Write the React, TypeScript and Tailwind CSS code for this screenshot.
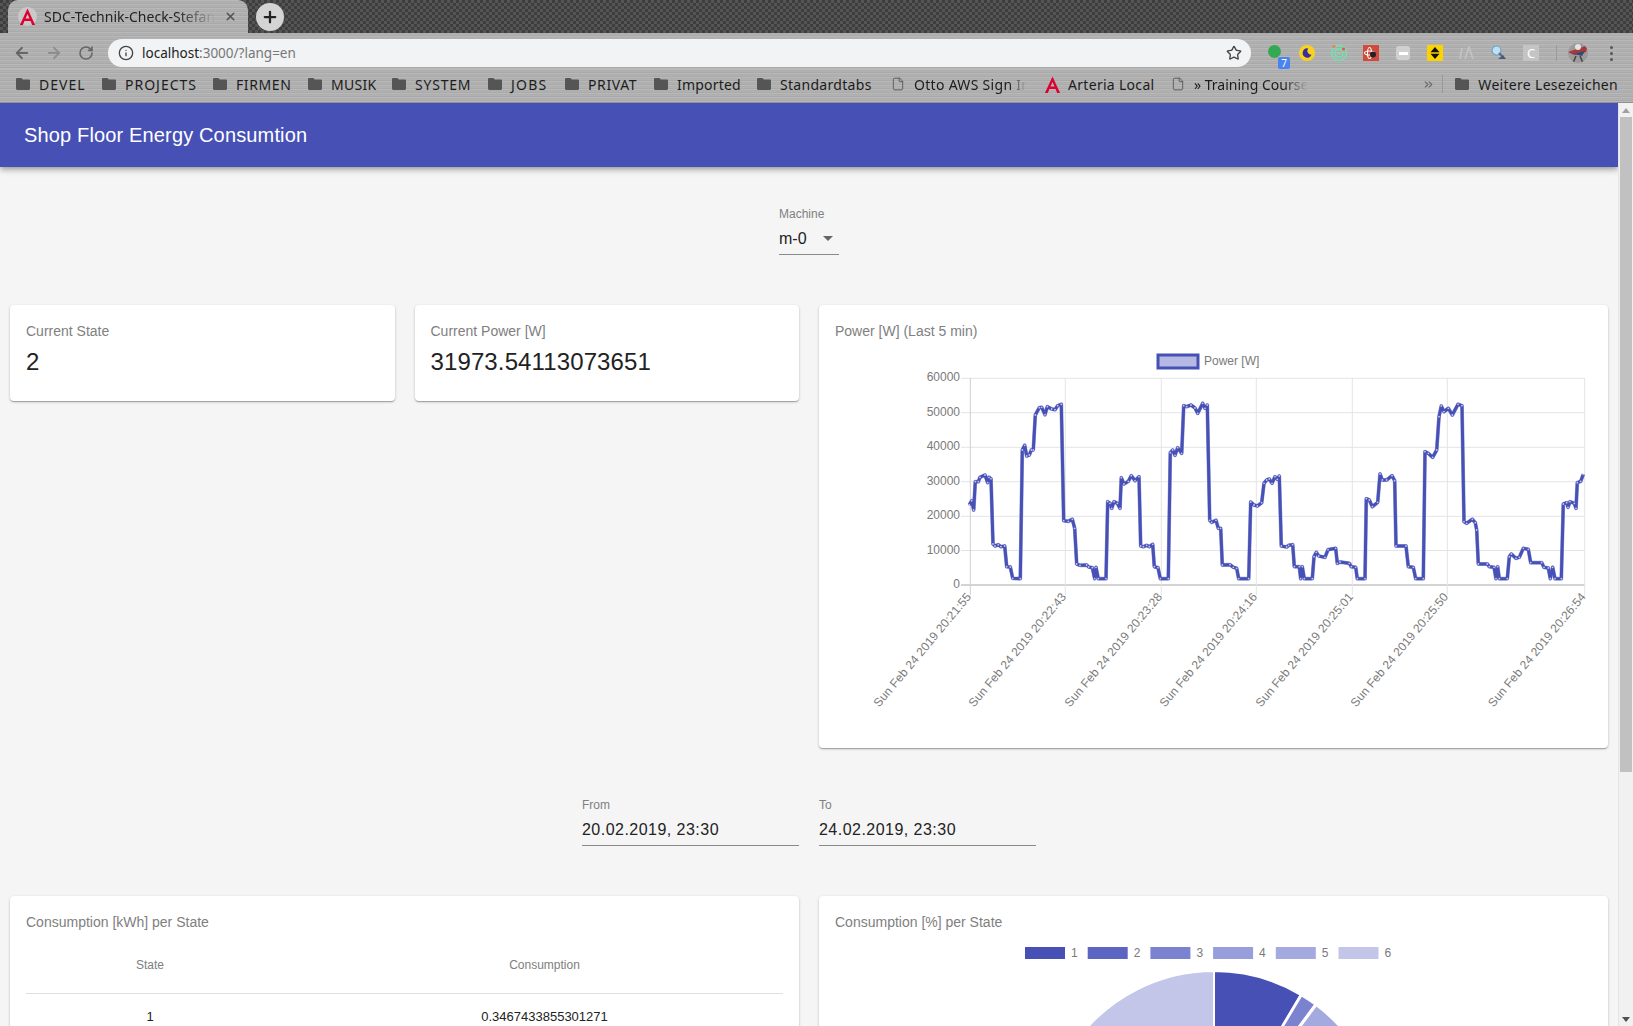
import React from "react";
import { ArrowLeft, ArrowRight, RotateCw, Info, Star, X, Plus, ChevronsRight, File } from "lucide-react";

const BLUE = "#4750b5";

const z3: [number, number][] = [[208,495],[215,482],[221,510],[226,425],[235,425],[240,412],[255,405],[263,428],[267,412],[273,416],[279,612],[285,618],[295,614],[303,620],[314,618],[320,680],[331,681],[338,715],[361,716],[367,330],[374,316],[380,348],[388,345],[394,330],[400,330],[406,225],[418,203],[425,202],[435,224],[442,200],[455,207],[465,209],[473,197],[484,193],[491,542],[505,544],[517,538],[524,565],[530,672],[540,676],[560,675],[566,681],[577,683],[584,716],[588,682],[595,716],[618,716],[623,485],[630,490],[635,505],[642,485],[652,490],[660,505],[664,413],[672,432],[685,424],[694,407],[705,422],[717,410],[722,618],[730,620],[740,616],[748,620],[758,613],[763,680],[774,683],[781,716],[805,716],[811,338],[818,330],[825,346],[833,323],[845,340],[851,197],[860,200],[873,195],[885,204],[893,220],[908,190],[915,205],[922,195],[929,541],[935,547],[948,541],[955,565],[962,565],[967,675],[990,674],[1000,682],[1010,685],[1016,716],[1046,716],[1052,486],[1062,495],[1072,498],[1085,488],[1092,430],[1100,420],[1108,417],[1116,430],[1125,410],[1132,418],[1138,408],[1144,618],[1160,621],[1166,616]];
const z4: [number, number][] = [[158,614],[163,680],[178,680],[182,716],[187,680],[193,716],[217,716],[222,650],[229,637],[236,648],[255,652],[264,629],[287,625],[292,670],[300,666],[328,670],[334,680],[347,682],[352,716],[375,716],[379,476],[388,480],[397,500],[413,487],[420,402],[427,420],[440,420],[456,407],[464,422],[468,618],[498,618],[505,680],[520,682],[527,716],[550,716],[555,335],[565,340],[578,352],[590,330],[597,230],[604,198],[612,215],[625,205],[637,225],[654,193],[666,197],[672,545],[680,550],[697,538],[706,548],[710,570],[715,672],[742,672],[748,680],[762,682],[768,716],[773,680],[778,716],[802,716],[808,650],[814,642],[828,655],[838,652],[850,625],[865,628],[872,668],[905,668],[912,682],[925,684],[931,716],[938,682],[945,716],[964,716],[970,492],[980,488],[984,502],[990,485],[1003,490],[1008,505],[1012,428],[1022,424],[1030,403]];

const pts: [number, number][] = [
  ...z3.map(([x, y]) => [900 + x / 3, 340 + y / 3] as [number, number]),
  ...z4.map(([x, y]) => [1240 + x / 3, 340 + y / 3] as [number, number]),
];
const line = pts.map(([x, y]) => `${x.toFixed(1)},${y.toFixed(1)}`).join(" ");

const yLabels = ["60000", "50000", "40000", "30000", "20000", "10000", "0"];
const yPos = [378.3, 412.7, 447.3, 481.7, 516.3, 550.5, 585];
const xPos = [970.3, 1065.3, 1161.3, 1256.3, 1352.3, 1447.3, 1584.7];
const xLabels = ["20:21:55", "20:22:43", "20:23:28", "20:24:16", "20:25:01", "20:25:50", "20:26:54"];

function PowerChart() {
  return (
    <svg viewBox="835 345 757 390" className="block w-[757px] h-[390px]" fontFamily="'Liberation Sans', sans-serif">
      <rect x="1158" y="355" width="40" height="13" fill="#b5b9e3" stroke={BLUE} strokeWidth="3" />
      <text x="1204" y="365" fontSize="12" fill="#7a7a7a">Power [W]</text>
      {yPos.map((y, i) => (
        <g key={y}>
          <line x1="961" x2="1585" y1={y} y2={y} stroke={i === 6 ? "#c6c6c6" : "#e4e4e4"} strokeWidth={i === 6 ? 1.6 : 1} />
          <text x="960" y={y + 3} fontSize="12" fill="#7a7a7a" textAnchor="end">{yLabels[i]}</text>
        </g>
      ))}
      {xPos.map((x, i) => (
        <line key={x} x1={x} x2={x} y1="378" y2="595" stroke={i === 0 ? "#cfcfcf" : "#e4e4e4"} />
      ))}
      <polyline points={line} fill="none" stroke="#9ca1dc" strokeWidth="3.8" strokeLinejoin="round" />
      <polyline points={line} fill="none" stroke={BLUE} strokeWidth="3" strokeLinejoin="round" />
      {pts.map(([x, y], i) => (
        <circle key={i} cx={x} cy={y} r="0.9" fill="#c3c6ea" />
      ))}
      {xPos.map((x, i) => (
        <text key={x} transform={`translate(${x - 2} 594) rotate(-50)`} fontSize="12" letterSpacing="0.1" fill="#7a7a7a" textAnchor="end" dominantBaseline="hanging" dy="-4">
          {`Sun Feb 24 2019 ${xLabels[i]}`}
        </text>
      ))}
    </svg>
  );
}

function slice(a0: number, a1: number) {
  const cx = 1214, cy = 1141, r = 170;
  const p = (a: number) => {
    const t = (a * Math.PI) / 180;
    return `${(cx + r * Math.sin(t)).toFixed(2)} ${(cy - r * Math.cos(t)).toFixed(2)}`;
  };
  return `M${cx} ${cy} L${p(a0)} A${r} ${r} 0 ${a1 - a0 > 180 ? 1 : 0} 1 ${p(a1)} Z`;
}

const pieColors = ["#4750b5", "#5d65c3", "#7b83d1", "#989edb", "#a4a9df", "#c3c6e8"];
const pieAngles: [number, number][] = [[0, 30.7], [30.7, 31], [31, 36.6], [36.6, 37], [37, 130], [130, 360]];

function PieChart() {
  return (
    <svg viewBox="835 935 757 320" className="block w-[757px] h-[320px]" fontFamily="'Liberation Sans', sans-serif">
      {pieColors.map((c, i) => (
        <g key={c}>
          <rect x={1025 + i * 62.7} y="947" width="40" height="12" fill={c} />
          <text x={1071 + i * 62.7} y="957" fontSize="12" fill="#7a7a7a">{i + 1}</text>
        </g>
      ))}
      {pieAngles.map(([a, b], i) => (
        <path key={i} d={slice(a, b)} fill={pieColors[i]} stroke="#fff" strokeWidth="2" />
      ))}
    </svg>
  );
}

function Folder({ className = "" }: { className?: string }) {
  return (
    <svg viewBox="0 0 14 12" className={`w-[14px] h-[12px] shrink-0 ${className}`}>
      <path d="M1.2 0H5.4L6.8 1.6H12.8C13.5 1.6 14 2.1 14 2.8V10.8C14 11.5 13.5 12 12.8 12H1.2C.5 12 0 11.5 0 10.8V1.2C0 .5 .5 0 1.2 0Z" fill="#555" />
    </svg>
  );
}

function AngularLogo({ bg = false }: { bg?: boolean }) {
  return (
    <svg viewBox="0 0 18 18" className="w-[19px] h-[19px] shrink-0">
      {bg && <circle cx="9" cy="9" r="9" fill="#c9c9c9" />}
      <path d="M9 1.5 L16.2 17 H13.4 L11.9 13.2 H6.1 L4.6 17 H1.8 Z M9 6.6 L7.1 11 H10.9 Z" fill="#dd0031" fillRule="evenodd" />
    </svg>
  );
}

const bookmarks = [
  { t: "DEVEL", w: "w-[86px]", c: "tracking-[1px]" },
  { t: "PROJECTS", w: "w-[111px]", c: "tracking-[1px]" },
  { t: "FIRMEN", w: "w-[95px]", c: "tracking-[0.6px]" },
  { t: "MUSIK", w: "w-[84px]", c: "tracking-[0.3px]" },
  { t: "SYSTEM", w: "w-[96px]", c: "tracking-[0.8px]" },
  { t: "JOBS", w: "w-[77px]", c: "tracking-[1.2px]" },
  { t: "PRIVAT", w: "w-[89px]", c: "tracking-[0.6px]" },
  { t: "Imported", w: "w-[103px]", c: "tracking-[0.2px]" },
  { t: "Standardtabs", w: "w-[134px]", c: "tracking-[0.3px]" },
];

const metal = "bg-[repeating-linear-gradient(0deg,#b9b9b9_0px,#b9b9b9_1px,#a9a9a9_1px,#a9a9a9_2px,#b2b2b2_2px,#b2b2b2_3px,#adadad_3px,#adadad_4px)]";
const chromeFont = "font-['Noto_Sans',sans-serif]";

function TabStrip() {
  return (
    <div className="h-[33px] flex items-end pl-[8px] bg-[repeating-conic-gradient(#555555_0_25%,#3e3e3e_0_50%)] bg-[length:6px_6px]">
      <div className={`w-[240px] h-[33px] rounded-t-[10px] ${metal} flex items-center pl-[10px] pr-[9px]`}>
        <AngularLogo bg />
        <span className={`ml-[7px] w-[179px] overflow-hidden whitespace-nowrap text-[14px] text-[#222] ${chromeFont} [mask-image:linear-gradient(to_right,black_74%,transparent_96%)]`}>
          SDC-Technik-Check-Stefan
        </span>
        <X size={13} strokeWidth={3} className="ml-[1px] text-[#555]" />
      </div>
      <div className="ml-[8px] mb-[2px] w-[28px] h-[28px] rounded-full bg-[#d4d4d4] flex items-center justify-center">
        <Plus size={18} strokeWidth={3} className="text-[#222]" />
      </div>
    </div>
  );
}

function ExtIcons() {
  const cell = "w-[32px] h-[32px] flex items-center justify-center relative shrink-0";
  return (
    <>
      <div className={`${cell} ml-[8px]`}>
        <div className="w-[13px] h-[13px] rounded-full bg-[#34a853] mt-[-3px] ml-[-1px]" />
        <div className="absolute left-[19px] top-[20px] w-[12px] h-[12px] rounded-[2px] bg-[#4a84ee] text-white text-[10px] leading-[12px] text-center font-['Noto_Sans',sans-serif]">7</div>
      </div>
      <div className={cell}>
        <svg viewBox="0 0 16 16" className="w-4 h-4"><circle cx="8" cy="8" r="8" fill="#f8d21c" /><path d="M9.2 3.5A4.6 4.6 0 1 0 12.6 9.6 3.8 3.8 0 0 1 9.2 3.5Z" fill="#3a2d9c" /></svg>
      </div>
      <div className={cell}>
        <svg viewBox="0 0 18 18" className="w-[18px] h-[18px]" fill="none"><circle cx="9" cy="9" r="7.5" stroke="#74e0b0" strokeWidth="1.6" /><circle cx="9" cy="9" r="4" stroke="#74e0b0" strokeWidth="1.6" /><circle cx="9" cy="9" r="1.3" fill="#74e0b0" /><circle cx="4" cy="2.5" r="1.5" fill="#e8804a" /><circle cx="13.5" cy="5" r="1.5" fill="#e25a3a" /></svg>
      </div>
      <div className={cell}>
        <svg viewBox="0 0 16 16" className="w-4 h-4"><rect width="16" height="16" fill="#d14a3c" /><g fill="none" stroke="#fff" strokeWidth="1.1"><ellipse cx="6.5" cy="8" rx="5" ry="2" /><ellipse cx="6.5" cy="8" rx="2" ry="5.5" /></g><circle cx="10" cy="9.5" r="3" fill="#222" /></svg>
      </div>
      <div className={cell}>
        <div className="w-[14px] h-[14px] rounded-[3px] bg-[#d0d0d0] flex items-center justify-center"><div className="w-[9px] h-[3px] bg-white" /></div>
      </div>
      <div className={cell}>
        <svg viewBox="0 0 16 16" className="w-4 h-4"><rect width="16" height="16" rx="1" fill="#fbd400" /><path d="M8 2 L12.5 7.2 H3.5 Z M8 14 L3.5 8.8 H12.5 Z" fill="#111" /></svg>
      </div>
      <div className={cell}>
        <svg viewBox="0 0 16 14" className="w-4 h-[14px]" fill="none" stroke="#c4c4c4" strokeWidth="1.6"><path d="M1 13 L3 2 M6 13 L10 1 L14 13" /></svg>
      </div>
      <div className={cell}>
        <svg viewBox="0 0 16 16" className="w-4 h-4"><circle cx="5.5" cy="5.5" r="4.5" fill="#bfe0f2" stroke="#6aa4c8" strokeWidth="1.2" /><path d="M8 8 L12 12" stroke="#5a6a8a" strokeWidth="2" /><path d="M7 14 L15 14 L12 10 Z" fill="#4a5a7a" /></svg>
      </div>
      <div className={cell}>
        <div className="w-4 h-4 bg-[#c4c4c4] text-white text-[13px] leading-4 text-center font-['Noto_Sans',sans-serif]">C</div>
      </div>
      <div className="ml-[9px] w-px h-[16px] bg-[#9a9a9a] shrink-0" />
      <div className="ml-[11px] w-[20px] h-[20px] rounded-full bg-[#9b9b9b] shrink-0 overflow-hidden">
        <svg viewBox="0 0 20 20" className="w-5 h-5"><path d="M0 9 L20 2 L18 9 L6 12 Z" fill="#a63a3a" /><path d="M6 11 L17 8 L14 13 Z" fill="#2f4a7a" /><circle cx="10" cy="4" r="3" fill="#e4e4e4" /><path d="M8 13 L5 20 M12 13 L15 20" stroke="#444" strokeWidth="1.5" /></svg>
      </div>
      <div className="ml-[22px] flex flex-col gap-[3px] shrink-0">
        <div className="w-[3px] h-[3px] rounded-full bg-[#555]" />
        <div className="w-[3px] h-[3px] rounded-full bg-[#555]" />
        <div className="w-[3px] h-[3px] rounded-full bg-[#555]" />
      </div>
    </>
  );
}

function Toolbar() {
  return (
    <div className={`h-[36px] flex items-center pl-[6px] pt-[4px] ${metal}`}>
      <div className="w-8 flex justify-center"><ArrowLeft size={18} strokeWidth={2.4} className="text-[#666]" /></div>
      <div className="w-8 flex justify-center"><ArrowRight size={18} strokeWidth={2.4} className="text-[#8e8e8e]" /></div>
      <div className="w-8 flex justify-center"><RotateCw size={16} strokeWidth={2.4} className="text-[#666]" /></div>
      <div className="ml-[6px] w-[1143px] h-[28px] rounded-full bg-[#f1f3f4] flex items-center pl-[10px] pr-[9px]">
        <Info size={16} strokeWidth={2} className="text-[#444]" />
        <span className={`ml-[8px] text-[13.5px] whitespace-nowrap ${chromeFont} text-[#777]`}>
          <span className="text-[#222]">localhost</span>:3000/?lang=en
        </span>
        <div className="flex-1" />
        <Star size={16} strokeWidth={2} className="text-[#444]" />
      </div>
      <ExtIcons />
    </div>
  );
}

function Bookmarks() {
  const text = `text-[14px] text-[#1c1c1c] whitespace-nowrap ${chromeFont}`;
  return (
    <div className={`h-[34px] flex items-center pl-[16px] pb-[3px] border-b border-[#8f8f8f] ${metal}`}>
      {bookmarks.map((b) => (
        <div key={b.t} className={`${b.w} flex items-center gap-[9px] shrink-0`}>
          <Folder />
          <span className={`${text} ${b.c}`}>{b.t}</span>
        </div>
      ))}
      <div className="w-[152px] flex items-center gap-[9px] shrink-0">
        <File size={14} strokeWidth={1.5} className="text-[#555] shrink-0" />
        <span className={`${text} tracking-[0.3px] w-[112px] overflow-hidden [mask-image:linear-gradient(to_right,black_85%,transparent)]`}>Otto AWS Sign In</span>
      </div>
      <div className="w-[128px] flex items-center gap-[6px] shrink-0">
        <AngularLogo />
        <span className={`${text} tracking-[0.3px]`}>Arteria Local</span>
      </div>
      <div className="flex items-center gap-[9px] shrink-0">
        <File size={14} strokeWidth={1.5} className="text-[#555] shrink-0" />
        <span className={`${text} w-[114px] overflow-hidden [mask-image:linear-gradient(to_right,black_78%,transparent)]`}>» Training Course</span>
      </div>
      <div className="flex-1" />
      <ChevronsRight size={13} strokeWidth={2} className="text-[#666]" />
      <div className="ml-[7px] w-px h-[18px] bg-[#999]" />
      <Folder className="ml-[12px]" />
      <span className={`${text} tracking-[0.3px] ml-[9px] mr-[15px]`}>Weitere Lesezeichen</span>
    </div>
  );
}

const cardCls = "bg-white rounded-[4px] shadow-[0_1px_3px_rgba(0,0,0,0.2),0_1px_1px_rgba(0,0,0,0.14),0_2px_1px_-1px_rgba(0,0,0,0.12)]";
const titleCls = "text-[14px] leading-[20px] text-[#808080]";

function DateField({ label, value }: { label: string; value: string }) {
  return (
    <div className="w-[217px]">
      <div className="text-[12px] leading-[14px] text-[#808080]">{label}</div>
      <div className="mt-[6px] h-[28px] border-b border-[#8a8a8a] text-[16px] leading-[24px] text-[#222] tracking-[0.47px]">{value}</div>
    </div>
  );
}

function Scrollbar() {
  return (
    <div className="w-[15px] shrink-0 bg-[#f1f1f1] border-l border-[#e4e4e4] flex flex-col">
      <div className="h-[14px] flex items-center justify-center">
        <div className="w-0 h-0 border-x-[4px] border-x-transparent border-b-[5px] border-b-[#a0a0a0]" />
      </div>
      <div className="h-[655px] mx-[1px] bg-[#c1c1c1]" />
      <div className="flex-1" />
      <div className="h-[14px] flex items-center justify-center">
        <div className="w-0 h-0 border-x-[4px] border-x-transparent border-t-[5px] border-t-[#505050]" />
      </div>
    </div>
  );
}

export default function App() {
  return (
    <div className="h-screen w-full overflow-hidden flex flex-col bg-[#f5f5f5] font-['Liberation_Sans',Arial,sans-serif]">
      <TabStrip />
      <Toolbar />
      <Bookmarks />
      <div className="flex-1 min-h-0 flex">
        <div className="flex-1 min-w-0 overflow-hidden">
          <header className="h-[64px] bg-[#4750b5] flex items-center pl-[24px] text-white text-[20px] tracking-[0.15px] shadow-[0_2px_4px_-1px_rgba(0,0,0,0.2),0_4px_5px_0_rgba(0,0,0,0.14),0_1px_10px_0_rgba(0,0,0,0.12)] relative">
            Shop Floor Energy Consumtion
          </header>
          <div className="h-[138px] flex justify-center pt-[40px]">
            <div className="w-[60px]">
              <div className="text-[12px] leading-[14px] text-[#808080]">Machine</div>
              <div className="mt-[4px] h-[30px] border-b border-[#8a8a8a] flex items-center justify-between pr-[6px] pb-[2px] text-[16px] text-[#222]">
                <span>m-0</span>
                <div className="w-0 h-0 border-x-[5px] border-x-transparent border-t-[5px] border-t-[#666]" />
              </div>
            </div>
          </div>
          <div className="grid grid-cols-4 gap-x-5 px-[10px]">
            <div className={`${cardCls} h-[96px] p-4`}>
              <div className={titleCls}>Current State</div>
              <div className="mt-[5px] text-[24px] leading-[32px] text-[#222]">2</div>
            </div>
            <div className={`${cardCls} h-[96px] p-4`}>
              <div className={titleCls}>Current Power [W]</div>
              <div className="mt-[5px] text-[24px] leading-[32px] tracking-[0.12px] text-[#222]">31973.54113073651</div>
            </div>
            <div className={`${cardCls} col-span-2 h-[443px] px-4 pt-4`}>
              <div className={titleCls}>Power [W] (Last 5 min)</div>
              <div className="mt-[4px]"><PowerChart /></div>
            </div>
          </div>
          <div className="h-[148px] flex justify-center gap-5 pt-[50px]">
            <DateField label="From" value="20.02.2019, 23:30" />
            <DateField label="To" value="24.02.2019, 23:30" />
          </div>
          <div className="grid grid-cols-4 gap-x-5 px-[10px]">
            <div className={`${cardCls} col-span-2 h-[300px] px-4 pt-4`}>
              <div className={titleCls}>Consumption [kWh] per State</div>
              <div className="mt-[4px] grid grid-cols-[248px_1fr] border-b border-[#e0e0e0] h-[58px] text-[12px] text-[#808080] items-center">
                <div className="text-center">State</div>
                <div className="text-center pl-[32px]">Consumption</div>
              </div>
              <div className="grid grid-cols-[248px_1fr] h-[46px] text-[13px] text-[#222] items-center">
                <div className="text-center">1</div>
                <div className="text-center pl-[32px]">0.3467433855301271</div>
              </div>
            </div>
            <div className={`${cardCls} col-span-2 h-[300px] px-4 pt-4`}>
              <div className={titleCls}>Consumption [%] per State</div>
              <div className="mt-[3px]"><PieChart /></div>
            </div>
          </div>
        </div>
        <Scrollbar />
      </div>
    </div>
  );
}
